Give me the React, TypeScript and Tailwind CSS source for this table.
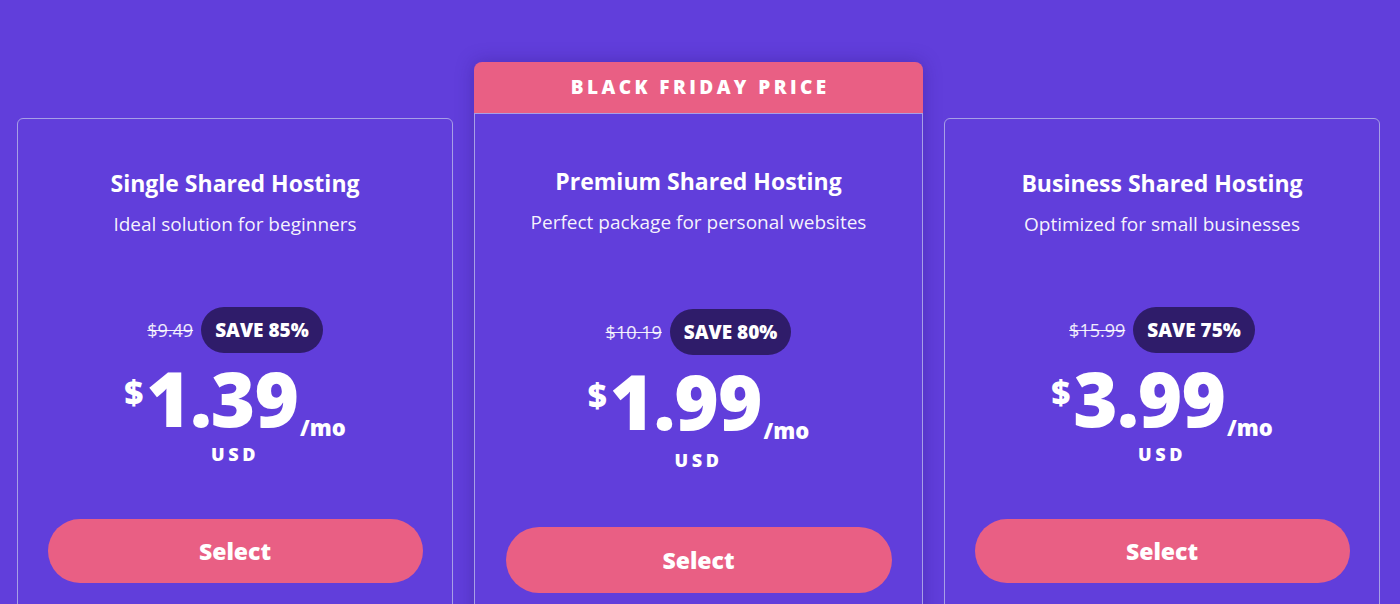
const plans = [
  {
    name: 'Single Shared Hosting',
    desc: 'Ideal solution for beginners',
    old: '$9.49',
    save: 'SAVE 85%',
    price: '1.39',
  },
  {
    name: 'Premium Shared Hosting',
    desc: 'Perfect package for personal websites',
    old: '$10.19',
    save: 'SAVE 80%',
    price: '1.99',
    featured: true,
  },
  {
    name: 'Business Shared Hosting',
    desc: 'Optimized for small businesses',
    old: '$15.99',
    save: 'SAVE 75%',
    price: '3.99',
  },
]

type Plan = (typeof plans)[number]

function PlanBody({ plan }: { plan: Plan }) {
  const f = !!plan.featured
  return (
    <div className="flex flex-col items-center text-white">
      <h3 className="text-[23px] leading-[30px] font-bold">{plan.name}</h3>
      <p className="mt-[13px] text-[19px] leading-[26px] font-medium text-white/95">{plan.desc}</p>

      <div className={f ? 'mt-[74px] flex items-center gap-2' : 'mt-[70px] flex items-center gap-2'}>
        <span className="text-[18px] font-medium line-through text-white/90">{plan.old}</span>
        <span className="h-[46px] px-[14px] rounded-full bg-[#2f1c6a] flex items-center text-[19px] font-extrabold">
          {plan.save}
        </span>
      </div>

      <div className={f ? 'mt-[8px] flex items-baseline' : 'mt-[7px] flex items-baseline'}>
        <span className="self-start mt-[16px] mr-[3px] text-[33px] leading-none font-extrabold">$</span>
        <span className="text-[76px] leading-none font-extrabold tracking-[-1px]">{plan.price}</span>
        {/* /mo hangs a little under the digits' baseline */}
        <span className="ml-[2px] translate-y-[9px] text-[22px] leading-none font-extrabold">/mo</span>
      </div>

      <div className={f ? 'mt-[11px] text-[18px] leading-[20px] font-extrabold tracking-[0.2em]' : 'mt-[8px] text-[18px] leading-[20px] font-extrabold tracking-[0.2em]'}>
        USD
      </div>

      <button
        className={
          f
            ? 'mt-[57px] w-[386px] h-[66px] rounded-full bg-[#e95f84] text-[23px] font-extrabold text-white'
            : 'mt-[55px] w-[375px] h-[64px] rounded-full bg-[#e95f84] text-[23px] font-extrabold text-white'
        }
      >
        Select
      </button>
    </div>
  )
}

export default function App() {
  return (
    <div
      className="w-[1400px] h-[604px] overflow-hidden bg-[#613edb] flex items-start gap-[21px] px-[17px]"
      style={{ fontFamily: '"Open Sans", "Noto Sans", sans-serif' }}
    >
      {plans.map(plan =>
        plan.featured ? (
          <div
            key={plan.name}
            className="mt-[62px] w-[449px] shrink-0 rounded-lg shadow-[0_0_18px_rgba(40,20,120,0.35)]"
          >
            <div className="h-[51px] rounded-t-lg bg-[#e95f84] flex items-center justify-center pl-[0.18em] text-white text-[19px] font-extrabold tracking-[0.18em]">
              BLACK FRIDAY PRICE
            </div>
            <div className="h-[520px] border border-[#a79fe6] pt-[52px]">
              <PlanBody plan={plan} />
            </div>
          </div>
        ) : (
          <div
            key={plan.name}
            className="mt-[118px] w-[436px] h-[520px] shrink-0 rounded-md border border-[#a79fe6] pt-[49px]"
          >
            <PlanBody plan={plan} />
          </div>
        )
      )}
    </div>
  )
}
